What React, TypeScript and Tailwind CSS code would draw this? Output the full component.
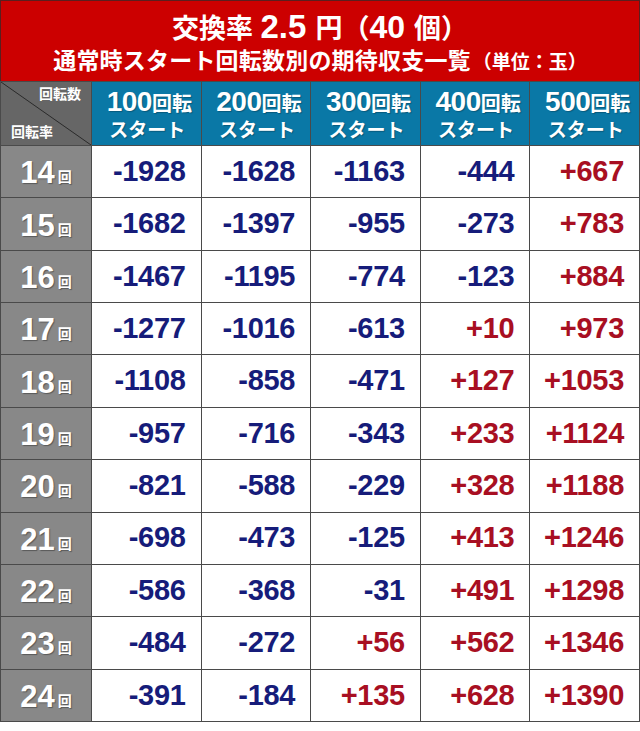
import React from 'react';

const cols = ['100', '200', '300', '400', '500'];

const rows: [number, string[]][] = [
  [14, ['-1928', '-1628', '-1163', '-444', '+667']],
  [15, ['-1682', '-1397', '-955', '-273', '+783']],
  [16, ['-1467', '-1195', '-774', '-123', '+884']],
  [17, ['-1277', '-1016', '-613', '+10', '+973']],
  [18, ['-1108', '-858', '-471', '+127', '+1053']],
  [19, ['-957', '-716', '-343', '+233', '+1124']],
  [20, ['-821', '-588', '-229', '+328', '+1188']],
  [21, ['-698', '-473', '-125', '+413', '+1246']],
  [22, ['-586', '-368', '-31', '+491', '+1298']],
  [23, ['-484', '-272', '+56', '+562', '+1346']],
  [24, ['-391', '-184', '+135', '+628', '+1390']],
];

const font = { fontFamily: '"Liberation Sans", "Noto Sans CJK JP", Arial, sans-serif' };

export default function App() {
  return (
    <div className="w-[640px] h-[731px] bg-white" style={font}>
      {/* title */}
      <div className="h-[81px] bg-[#cc0000] border border-b-0 border-[#5a1f1f] flex flex-col items-center text-white font-bold leading-none">
        <div className="mt-[9px] flex items-baseline whitespace-pre">
          <span className="text-[27px]">交換率 </span>
          <span className="text-[33px]">2.5 </span>
          <span className="text-[27px]">円（</span>
          <span className="text-[32px]">40 </span>
          <span className="text-[27px]">個）</span>
        </div>
        <div className="mt-[7px] flex items-baseline">
          <span className="text-[23px] tracking-[0.2px]">通常時スタート回転数別の期待収支一覧</span>
          <span className="text-[19px] ml-[2px]">（単位：玉）</span>
        </div>
      </div>

      {/* table */}
      <div className="grid grid-cols-[90px_repeat(5,1fr)] grid-rows-[63px_repeat(11,1fr)] gap-px bg-[#4a4a4a] border border-[#4a4a4a] h-[641px]">
        <div className="relative bg-[#666666] text-white font-bold text-[14px] leading-none">
          <svg className="absolute inset-0 w-full h-full" viewBox="0 0 90 63" preserveAspectRatio="none">
            <line x1="0" y1="0" x2="90" y2="63" stroke="#2a2a2a" strokeWidth="1" />
          </svg>
          <span className="absolute right-[10px] top-[5px]">回転数</span>
          <span className="absolute left-[10px] bottom-[6px]">回転率</span>
        </div>
        {cols.map((c) => (
          <div key={c} className="bg-[#0a78a6] text-white font-bold flex flex-col items-center justify-center leading-none [text-shadow:1px_1px_1px_rgba(0,0,0,0.25)]">
            <div className="flex items-baseline pl-[6px]">
              <span className="text-[28px] tracking-[-0.5px]">{c}</span>
              <span className="text-[20px]">回転</span>
            </div>
            <div className="text-[19px] mt-[5px] pl-[2px]">スタート</div>
          </div>
        ))}

        {rows.map(([label, vals]) => (
          <React.Fragment key={label}>
            <div className="bg-[#888888] text-white font-bold flex items-baseline justify-center pt-[2px] leading-none [text-shadow:1px_1px_1px_rgba(0,0,0,0.35)] items-center">
              <span className="text-[31px]">{label}</span>
              <span className="text-[14px] ml-[3px] mt-[9px]">回</span>
            </div>
            {vals.map((v, i) => (
              <div
                key={i}
                className={
                  'bg-white flex items-center justify-end pr-[15px] text-[29px] font-bold tracking-[-0.3px] ' +
                  (v.startsWith('+') ? 'text-[#a80f22]' : 'text-[#161c7a]')
                }
              >
                {v}
              </div>
            ))}
          </React.Fragment>
        ))}
      </div>
    </div>
  );
}
